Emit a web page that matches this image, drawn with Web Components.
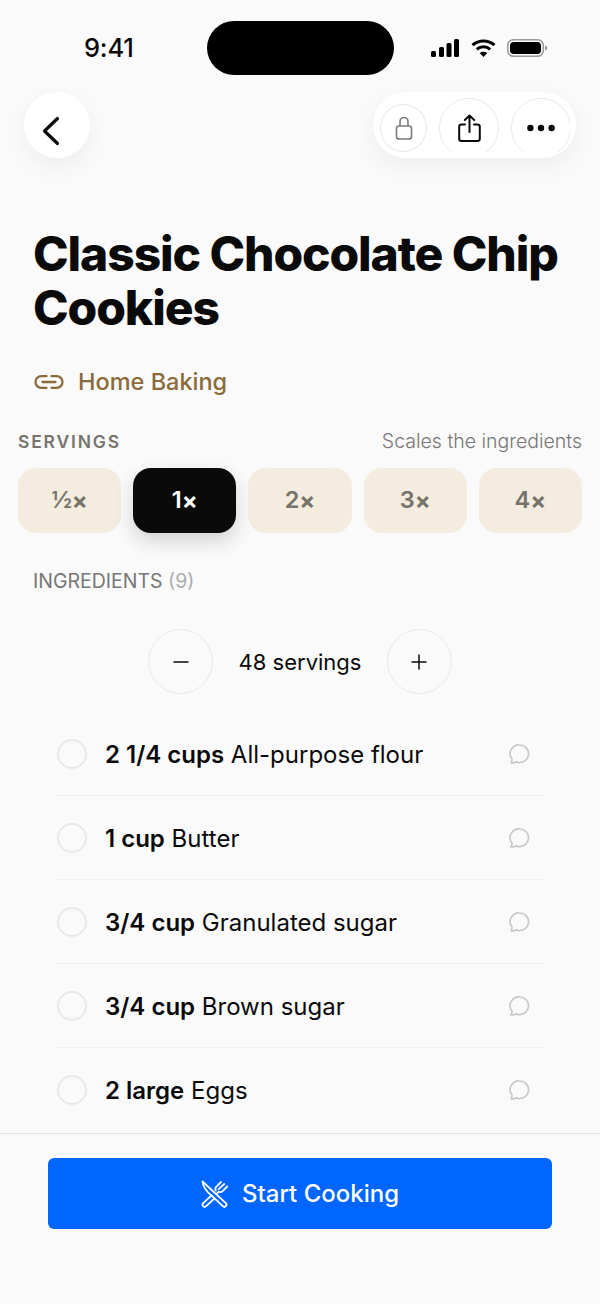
<!DOCTYPE html>
<html lang="en"><head><meta charset="utf-8"><title>Classic Chocolate Chip Cookies</title>
<style>
html,body{margin:0;padding:0;background:#fafafa}
body{font-family:Inter,"Liberation Sans",sans-serif;color:#0a0a0a;width:600px;height:1304px;overflow:hidden}
</style></head><body>
<recipe-screen>
  <status-bar></status-bar>
  <top-nav></top-nav>
  <recipe-head title-text="Classic Chocolate Chip Cookies" source="Home Baking"></recipe-head>
  <serving-picker></serving-picker>
  <section-label count="(9)">INGREDIENTS</section-label>
  <serving-stepper>48 servings</serving-stepper>
  <ingredient-list>
    <ingredient-row amount="2 1/4 cups">All-purpose flour</ingredient-row>
    <ingredient-row amount="1 cup">Butter</ingredient-row>
    <ingredient-row amount="3/4 cup">Granulated sugar</ingredient-row>
    <ingredient-row amount="3/4 cup">Brown sugar</ingredient-row>
    <ingredient-row amount="2 large" last>Eggs</ingredient-row>
  </ingredient-list>
  <cook-footer>Start Cooking</cook-footer>
</recipe-screen>
<script>
function def(name, html, init){
  customElements.define(name, class extends HTMLElement{
    connectedCallback(){
      if(this.shadowRoot) return;
      const r=this.attachShadow({mode:'open'});
      r.innerHTML=typeof html==='function'?html(this):html;
      if(init) init(this,r);
    }
  });
}
def('recipe-screen',`<style>:host{display:flex;flex-direction:column;width:600px;height:1304px;overflow:hidden}</style><slot></slot>`);

def('status-bar',`<style>
:host{display:flex;height:92px;box-sizing:border-box;position:relative;font-family:Inter,sans-serif}
.time{position:absolute;left:84px;top:33px;font-size:25.5px;line-height:30px;font-weight:500;letter-spacing:-.2px;color:#0a0a0a}
.row{display:flex;width:100%;height:54px;margin-top:21px;justify-content:center}
.island{width:187px;height:54px;border-radius:27px;background:#000}
.icons{position:absolute;left:430px;top:39px;display:flex;gap:11px;align-items:center;height:18px}
svg{display:block}
</style>
<span class="time">9:41</span>
<div class="row"><div class="island"></div></div>
<div class="icons">
<svg width="30" height="18" viewBox="0 0 30 18"><rect x="1" y="12" width="5" height="6" rx="1.6"/><rect x="9" y="8" width="5" height="10" rx="1.6"/><rect x="16.5" y="4" width="5" height="14" rx="1.6"/><rect x="24" y="0" width="5" height="18" rx="1.6"/></svg>
<svg width="25" height="18" viewBox="0 0 25 18" fill="none" stroke="#000" stroke-width="3"><path d="M1.5 6.2C7.5 .6 17.5 .6 23.5 6.2"/><path d="M5.8 10.4C9.5 7 15.5 7 19.2 10.4"/><path d="M12.5 18l-3.8-4c2.2-1.8 5.4-1.8 7.6 0z" fill="#000" stroke="none"/></svg>
<svg width="41" height="18" viewBox="0 0 41 18"><rect x=".75" y=".75" width="35.5" height="16.5" rx="5.6" fill="none" stroke="#9a9a9a" stroke-width="1.5"/><rect x="3" y="3" width="31" height="12" rx="3.8"/><path d="M38 6.5c1.6.4 2.4 1.3 2.4 2.5s-.8 2.1-2.4 2.5z" fill="#9a9a9a"/></svg>
</div>`);

def('round-icon',`<style>
:host{display:flex;align-items:center;justify-content:center;box-sizing:border-box;flex:none;border:1.5px solid #e8e8e8;border-radius:50%;width:var(--w,60px);height:var(--h,60px);background:#fff}
</style><slot></slot>`);

def('top-nav',`<style>
:host{display:flex;justify-content:space-between;padding:0 24px;height:66px;flex:none}
.card{background:#fff;box-shadow:0 8px 26px rgba(0,0,0,.055);display:flex}
.back{width:66px;height:66px;border-radius:50%;align-items:center;justify-content:center}
.pill{width:203px;height:66px;border-radius:33px;box-sizing:border-box;padding:6px 6px 0 7px}
.clip{display:flex;gap:12px;height:54px;overflow:hidden;align-items:flex-start}
.lock{margin-top:6px;--w:47px;--h:48px}
svg{display:block}
</style>
<div class="card back"><svg width="18" height="30" viewBox="0 0 18 30" style="margin:11px 0 0 -12px" fill="none" stroke="#0a0a0a" stroke-width="3.2" stroke-linecap="round" stroke-linejoin="round"><path d="M15.5 2.5 2.500 15 15.500 27.500"/></svg></div>
<div class="card pill"><div class="clip">
<round-icon class="lock"><svg width="18" height="24" viewBox="0 0 18 24" fill="none" stroke="#7c7c7c" stroke-width="1.6"><rect x="1.500" y="10" width="15" height="13" rx="2.600"/><path d="M5 10V5.500a4 4 0 0 1 8 0V10"/></svg></round-icon>
<round-icon><svg width="23" height="28" viewBox="0 0 23 28" fill="none" stroke="#0a0a0a" stroke-width="2" stroke-linecap="round" stroke-linejoin="round"><path d="M7 10.500H3.500a2.300 2.300 0 0 0-2.300 2.300v11.900a2.300 2.300 0 0 0 2.300 2.300h16a2.300 2.300 0 0 0 2.300-2.300V12.800a2.300 2.300 0 0 0-2.300-2.300H16"/><path d="M11.500 18V1.500M6.800 6l4.700-4.500L16.200 6"/></svg></round-icon>
<round-icon><svg width="28" height="8" viewBox="0 0 28 8" fill="#0a0a0a"><circle cx="3.400" cy="4" r="3.200"/><circle cx="14" cy="4" r="3.200"/><circle cx="24.600" cy="4" r="3.200"/></svg></round-icon>
</div></div>`);

def('recipe-head',h=>`<style>
:host{display:block;padding:69px 33px 0;flex:none}
h1{margin:0;font:800 48px/54px Inter,sans-serif;letter-spacing:-1.1px;color:#0a0a0a}
.src{display:flex;align-items:center;gap:14px;margin:32px 0 0 1px;height:30px;color:#8b6b3a;font:500 23.500px/30px Inter,sans-serif}
svg{display:block}
</style>
<h1>${h.getAttribute('title-text')}</h1>
<div class="src"><svg width="30" height="14" viewBox="0 0 30 14" fill="none" stroke="#8b6b3a" stroke-width="2.300" stroke-linecap="round"><path d="M12.500 1.200H7.300a5.800 5.800 0 0 0 0 11.600h5.200M17.500 1.200h5.200a5.800 5.800 0 0 1 0 11.600h-5.200M8.500 7h13"/></svg><span>${h.getAttribute('source')}</span></div>`);

def('serving-picker',`<style>
:host{display:block;padding:34px 18px 0;flex:none;font-family:Inter,sans-serif}
.head{display:flex;justify-content:space-between;align-items:center;height:20px;margin-bottom:17px}
.l{font-size:17.500px;font-weight:600;letter-spacing:1.800px;color:#77746e}
.r{font-size:19.500px;font-weight:350;color:#777}
.chips{display:grid;grid-template-columns:repeat(5,1fr);gap:12px}
button{all:unset;box-sizing:border-box;display:flex;align-items:center;justify-content:center;height:65px;border-radius:18px;background:#f3ecdf;color:#77736b;font:600 23.500px/1 Inter,sans-serif}
button.on{background:#0a0a0a;color:#fff;box-shadow:0 8px 20px rgba(0,0,0,.16)}
i{font-style:normal;vertical-align:-1px;font-weight:700}
</style>
<div class="head"><span class="l">SERVINGS</span><span class="r">Scales the ingredients</span></div>
<div class="chips"><button><span>½<i>×</i></span></button><button class="on"><span>1<i>×</i></span></button><button><span>2<i>×</i></span></button><button><span>3<i>×</i></span></button><button><span>4<i>×</i></span></button></div>`);

def('section-label',h=>`<style>
:host{display:block;padding:38px 33px 0;height:20px;flex:none;font:400 19.500px/21px Inter,sans-serif;color:#777}
span{color:#adadad;font-weight:400}
</style><slot></slot> <span>${h.getAttribute('count')}</span>`);

def('serving-stepper',`<style>
:host{display:flex;justify-content:center;align-items:center;gap:25.500px;margin-top:38px;height:65px;flex:none;font:420 22px/1 Inter,sans-serif;color:#0a0a0a}
.b{box-sizing:border-box;width:65px;height:65px;border:1.5px solid #e8e8e8;border-radius:50%;display:flex;align-items:center;justify-content:center}
svg{display:block}
</style>
<div class="b"><svg width="16" height="16" viewBox="0 0 16 16" stroke="#0a0a0a" stroke-width="1.500" stroke-linecap="round"><path d="M1 8h14"/></svg></div>
<span><slot></slot></span>
<div class="b"><svg width="16" height="16" viewBox="0 0 16 16" stroke="#0a0a0a" stroke-width="1.500" stroke-linecap="round"><path d="M1 8h14M8 1v14"/></svg></div>`);

def('ingredient-list',`<style>:host{display:block;padding:18px 56px 0 57px;flex:none}</style><slot></slot>`);

def('ingredient-row',h=>`<style>
:host{display:flex;align-items:center;height:84px;box-sizing:border-box;font:370 24px/32px Inter,sans-serif;color:#0a0a0a;${h.hasAttribute('last')?'':'border-bottom:1px solid #efefef;'}}
.c{box-sizing:border-box;width:30px;height:30px;border:2px solid #e8e8e8;border-radius:50%;flex:none;margin-right:18px}
.t{flex:1;padding-top:2px}
b{font-weight:600}
svg{display:block;margin-right:14px}
</style>
<div class="c"></div><div class="t"><b>${h.getAttribute('amount')}</b> <slot></slot></div>
<svg width="21" height="20" viewBox="0 0 21 20" fill="none" stroke="#c9c9c9" stroke-width="1.700" stroke-linejoin="round"><path d="M10.700 1a9 8.800 0 1 1-3.700 16.900c-1.600.8-3.500 1.200-5.200 1.100.9-1 1.300-2.300 1.300-3.700A9 8.800 0 0 1 10.700 1z"/></svg>`);

def('cook-footer',`<style>
:host{display:block;flex:none;margin-top:1px;border-top:1px solid #e4e4e4;padding:24px 48px 0}
button{all:unset;box-sizing:border-box;display:flex;width:504px;height:71px;align-items:center;justify-content:center;gap:14px;border-radius:6px;background:#0066ff;color:#fff;font:500 24px/1 Inter,sans-serif}
svg{display:block}
</style>
<button><svg width="27" height="28" viewBox="0 0 27 28" fill="none" stroke="#fff" stroke-width="1.800" stroke-linecap="round" stroke-linejoin="round"><path d="M1.500 1.500 24.800 23.200a2.100 2.100 0 0 1-3 3L10.500 15.500C5.500 11.500 2 6.500 1.500 1.500z"/><path d="M10.300 15.700 2.200 23.200a2.100 2.100 0 0 0 3 3L13.400 18.500M15.800 13.700l1.900-1.900c1.300.6 2.800.4 3.900-.6l4.600-4.700M14.800 10.600c-.7-1.200-.5-2.700.5-3.800L20 2M17.500 9.300l5.700-5.300"/></svg><span><slot></slot></span></button>`);
</script>
</body></html>
